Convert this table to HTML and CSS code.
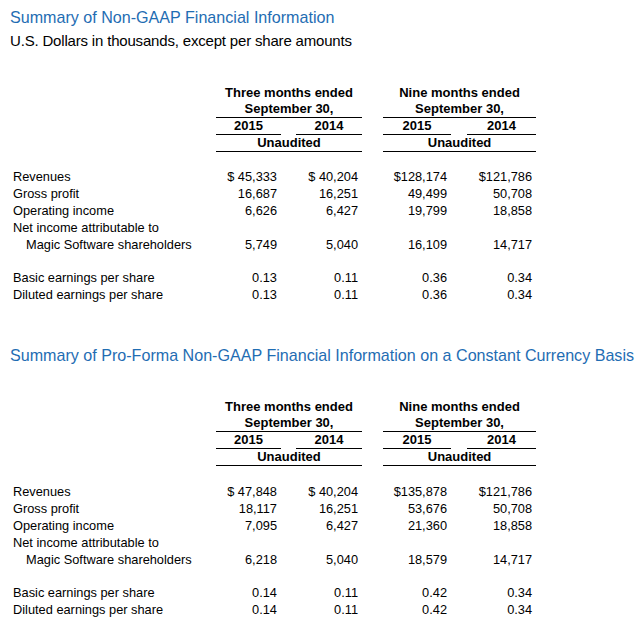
FILE: index.html
```html
<!DOCTYPE html>
<html>
<head>
<meta charset="utf-8">
<link rel="stylesheet" href="styles.css">
</head>
<body>
<div class="page">
  <h1 class="title">Summary of Non-GAAP Financial Information</h1>
  <p class="subtitle">U.S. Dollars in thousands, except per share amounts</p>
  <table class="fin fin-first">
    <colgroup>
      <col class="c-label"><col class="c-a"><col class="c-gap"><col class="c-b"><col class="c-gap2"><col class="c-c"><col class="c-gap3"><col class="c-d">
    </colgroup>
    <tr class="hd hd-top"><td></td><td colspan="3">Three months ended</td><td></td><td colspan="3">Nine months ended</td></tr>
    <tr class="hd"><td></td><td colspan="3" class="ul">September 30,</td><td></td><td colspan="3" class="ul">September 30,</td></tr>
    <tr class="hd"><td></td><td class="ul">2015</td><td></td><td class="ul">2014</td><td></td><td class="ul">2015</td><td></td><td class="ul">2014</td></tr>
    <tr class="hd"><td></td><td colspan="3" class="ul">Unaudited</td><td></td><td colspan="3" class="ul">Unaudited</td></tr>
    <tr class="blank"><td colspan="8"></td></tr>
    <tr class="row"><td class="lbl">Revenues</td><td class="num">$ 45,333</td><td></td><td class="num">$ 40,204</td><td></td><td class="num">$128,174</td><td></td><td class="num">$121,786</td></tr>
    <tr class="row"><td class="lbl">Gross profit</td><td class="num">16,687</td><td></td><td class="num">16,251</td><td></td><td class="num">49,499</td><td></td><td class="num">50,708</td></tr>
    <tr class="row"><td class="lbl">Operating income</td><td class="num">6,626</td><td></td><td class="num">6,427</td><td></td><td class="num">19,799</td><td></td><td class="num">18,858</td></tr>
    <tr class="row"><td class="lbl">Net income attributable to</td><td></td><td></td><td></td><td></td><td></td><td></td><td></td></tr>
    <tr class="row"><td class="lbl indent">Magic Software shareholders</td><td class="num">5,749</td><td></td><td class="num">5,040</td><td></td><td class="num">16,109</td><td></td><td class="num">14,717</td></tr>
    <tr class="row"><td colspan="8"></td></tr>
    <tr class="row"><td class="lbl">Basic earnings per share</td><td class="num">0.13</td><td></td><td class="num">0.11</td><td></td><td class="num">0.36</td><td></td><td class="num">0.34</td></tr>
    <tr class="row"><td class="lbl">Diluted earnings per share</td><td class="num">0.13</td><td></td><td class="num">0.11</td><td></td><td class="num">0.36</td><td></td><td class="num">0.34</td></tr>
  </table>

  <h1 class="title title-second">Summary of Pro-Forma Non-GAAP Financial Information on a Constant Currency Basis</h1>
  <table class="fin fin-second">
    <colgroup>
      <col class="c-label"><col class="c-a"><col class="c-gap"><col class="c-b"><col class="c-gap2"><col class="c-c"><col class="c-gap3"><col class="c-d">
    </colgroup>
    <tr class="hd hd-top"><td></td><td colspan="3">Three months ended</td><td></td><td colspan="3">Nine months ended</td></tr>
    <tr class="hd"><td></td><td colspan="3" class="ul">September 30,</td><td></td><td colspan="3" class="ul">September 30,</td></tr>
    <tr class="hd"><td></td><td class="ul">2015</td><td></td><td class="ul">2014</td><td></td><td class="ul">2015</td><td></td><td class="ul">2014</td></tr>
    <tr class="hd"><td></td><td colspan="3" class="ul">Unaudited</td><td></td><td colspan="3" class="ul">Unaudited</td></tr>
    <tr class="blank blank-wide"><td colspan="8"></td></tr>
    <tr class="row"><td class="lbl">Revenues</td><td class="num">$ 47,848</td><td></td><td class="num">$ 40,204</td><td></td><td class="num">$135,878</td><td></td><td class="num">$121,786</td></tr>
    <tr class="row"><td class="lbl">Gross profit</td><td class="num">18,117</td><td></td><td class="num">16,251</td><td></td><td class="num">53,676</td><td></td><td class="num">50,708</td></tr>
    <tr class="row"><td class="lbl">Operating income</td><td class="num">7,095</td><td></td><td class="num">6,427</td><td></td><td class="num">21,360</td><td></td><td class="num">18,858</td></tr>
    <tr class="row"><td class="lbl">Net income attributable to</td><td></td><td></td><td></td><td></td><td></td><td></td><td></td></tr>
    <tr class="row"><td class="lbl indent">Magic Software shareholders</td><td class="num">6,218</td><td></td><td class="num">5,040</td><td></td><td class="num">18,579</td><td></td><td class="num">14,717</td></tr>
    <tr class="row"><td colspan="8"></td></tr>
    <tr class="row"><td class="lbl">Basic earnings per share</td><td class="num">0.14</td><td></td><td class="num">0.11</td><td></td><td class="num">0.42</td><td></td><td class="num">0.34</td></tr>
    <tr class="row"><td class="lbl">Diluted earnings per share</td><td class="num">0.14</td><td></td><td class="num">0.11</td><td></td><td class="num">0.42</td><td></td><td class="num">0.34</td></tr>
  </table>
</div>
</body>
</html>
```
FILE: styles.css
```css
html, body {
  margin: 0;
  padding: 0;
  background: #ffffff;
}
.page {
  padding: 7px 0 0 10px;
  font-family: "Liberation Sans", Arial, sans-serif;
  color: #000;
}
.title {
  margin: 0;
  font-size: 16.1px;
  font-weight: normal;
  color: #1f6db3;
  line-height: 20px;
}
.subtitle {
  margin: 4px 0 0 0;
  font-size: 15px;
  letter-spacing: -0.18px;
  line-height: 20px;
}
.title-second {
  margin-top: 41px;
}
.fin {
  border-collapse: separate;
  border-spacing: 0;
  table-layout: fixed;
  width: 523px;
  margin-left: 3px;
  font-size: 12.8px;
}
.fin-first { margin-top: 34px; }
.fin-second { margin-top: 34px; }
.c-label { width: 203px; }
.c-a { width: 65px; }
.c-gap { width: 15px; }
.c-b { width: 66px; }
.c-gap2 { width: 21px; }
.c-c { width: 68px; }
.c-gap3 { width: 16px; }
.c-d { width: 69px; }
.fin td {
  padding: 0;
  white-space: nowrap;
  box-sizing: border-box;
}
.hd td {
  font-weight: bold;
  font-size: 13px;
  text-align: center;
  height: 17px;
  line-height: 16px;
  vertical-align: top;
  border-bottom: 1px solid transparent;
}
.hd.hd-top td {
  height: 16px;
  border-bottom: 0;
}
.hd td.ul {
  border-bottom-color: #000;
}
.blank td {
  height: 17px;
}
.blank-wide td {
  height: 18px;
}
.row td {
  height: 16.85px;
  line-height: 16px;
}
.lbl { text-align: left; }
.indent { padding-left: 13px !important; }
.num {
  text-align: right;
  padding-right: 4px !important;
}
```
